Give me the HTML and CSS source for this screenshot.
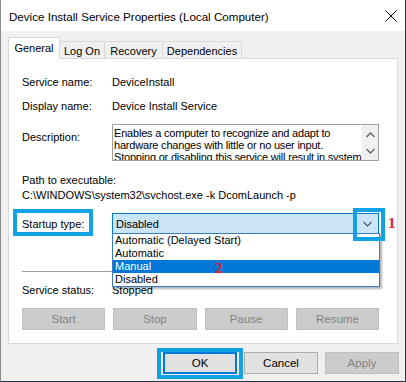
FILE: index.html
```html
<!DOCTYPE html>
<html>
<head>
<meta charset="utf-8">
<link rel="stylesheet" href="styles.css">
</head>
<body>
<div class="window">
  <div class="titlebar">
    <span class="title">Device Install Service Properties (Local Computer)</span>
    <svg class="close" width="12" height="12" viewBox="0 0 12 12"><path d="M0.5 0.5L11.5 11.5M11.5 0.5L0.5 11.5" stroke="#000" stroke-width="1"/></svg>
  </div>
  <div class="main">
    <div class="tabs">
      <div class="tab active t-general">General</div>
      <div class="tab t-logon">Log On</div>
      <div class="tab t-recovery">Recovery</div>
      <div class="tab t-deps">Dependencies</div>
    </div>
    <div class="panel">
      <div class="row r-first"><span class="lbl">Service name:</span><span class="val">DeviceInstall</span></div>
      <div class="row r-second"><span class="lbl">Display name:</span><span class="val">Device Install Service</span></div>
      <div class="row r-desc">
        <span class="lbl lbl-desc">Description:</span>
        <div class="desc">
          <div class="desc-text">Enables a computer to recognize and adapt to<br>hardware changes with little or no user input.<br>Stopping or disabling this service will result in system</div>
          <div class="scroll">
            <svg width="9" height="6" viewBox="0 0 9 6"><polyline points="0.5,5 4.5,1 8.5,5" fill="none" stroke="#606060" stroke-width="1.3"/></svg>
            <svg width="9" height="6" viewBox="0 0 9 6"><polyline points="0.5,1 4.5,5 8.5,1" fill="none" stroke="#606060" stroke-width="1.3"/></svg>
          </div>
        </div>
      </div>
      <div class="path-lbl">Path to executable:</div>
      <div class="path">C:\WINDOWS\system32\svchost.exe -k DcomLaunch -p</div>
      <div class="row r-startup">
        <span class="lbl">Startup type:</span>
        <div class="combo">
          <span class="combo-val">Disabled</span>
          <svg class="chev" width="9" height="6" viewBox="0 0 9 6"><polyline points="0.5,1 4.5,5 8.5,1" fill="none" stroke="#555" stroke-width="1.1"/></svg>
          <div class="list">
            <div class="item">Automatic (Delayed Start)</div>
            <div class="item">Automatic</div>
            <div class="item sel">Manual</div>
            <div class="item">Disabled</div>
          </div>
        </div>
      </div>
      <div class="sep"></div>
      <div class="row r-status"><span class="lbl">Service status:</span><span class="val">Stopped</span></div>
      <div class="svc-buttons">
        <div class="btn dis">Start</div>
        <div class="btn dis">Stop</div>
        <div class="btn dis">Pause</div>
        <div class="btn dis">Resume</div>
      </div>
    </div>
    <div class="actions">
      <div class="btn ok">OK</div>
      <div class="btn">Cancel</div>
      <div class="btn dis">Apply</div>
    </div>
  </div>
  <div class="mark mark-startup"></div>
  <div class="mark mark-chev"></div>
  <div class="mark mark-ok"></div>
  <div class="num num1">1</div>
  <div class="num num2">2</div>
</div>
</body>
</html>
```

FILE: styles.css
```css
html, body {
  margin: 0;
  padding: 0;
}
body {
  font-family: "Liberation Sans", Arial, sans-serif;
  font-size: 11px;
  color: #000;
  background: #f0f0f0;
}
.window {
  position: relative;
  width: 406px;
  height: 382px;
  box-sizing: border-box;
  background: #f0f0f0;
  border-left: 1px solid #8d8d8d;
  border-right: 1px solid #26344f;
  border-bottom: 1px solid #26344f;
  overflow: hidden;
  display: flex;
  flex-direction: column;
}
.titlebar {
  height: 31px;
  flex: none;
  background: #fff;
  display: flex;
  align-items: center;
  justify-content: space-between;
  padding: 0 8px 0 8px;
  font-size: 11.6px;
}
.title {
  padding-top: 1px;
}
.close {
  display: block;
  margin-top: 1px;
}
.main {
  padding: 6px 7px 0 7px;
}
.tabs {
  display: flex;
  align-items: flex-end;
  height: 21px;
}
.tab {
  box-sizing: border-box;
  height: 17px;
  border: 1px solid #d9d9d9;
  border-bottom: none;
  background: #f0f0f0;
  display: flex;
  align-items: center;
  justify-content: center;
  margin-left: -1px;
  padding-top: 1px;
}
.tab.active {
  height: 22px;
  margin-left: 0;
  margin-bottom: -1px;
  background: #fff;
  position: relative;
  z-index: 1;
  padding-top: 0;
  padding-bottom: 2px;
}
.t-general { width: 52px; }
.t-logon { width: 46px; }
.t-recovery { width: 59px; }
.t-deps { width: 80px; }
.panel {
  position: relative;
  box-sizing: border-box;
  height: 286px;
  background: #fff;
  border: 1px solid #d9d9d9;
  padding: 16px 18px 0 13px;
}
.row {
  display: flex;
  align-items: center;
  line-height: 14px;
}
.lbl {
  width: 90px;
  flex: none;
}
.r-second { margin-top: 10px; }
.r-desc {
  margin-top: 11px;
  align-items: flex-start;
}
.lbl-desc { padding-top: 6px; }
.desc {
  box-sizing: border-box;
  width: 267px;
  height: 37px;
  border: 1px solid #a0a0a0;
  display: flex;
  overflow: hidden;
}
.desc-text {
  flex: 1;
  line-height: 12px;
  padding: 2px 0 0 1px;
  white-space: nowrap;
  overflow: hidden;
  letter-spacing: -0.2px;
}
.scroll {
  width: 16px;
  flex: none;
  background: #f0f0f0;
  display: flex;
  flex-direction: column;
  align-items: center;
  gap: 10px;
  padding-top: 7px;
}
.scroll svg { display: block; }
.path-lbl {
  margin-top: 12px;
  line-height: 15px;
}
.path {
  line-height: 15px;
}
.r-startup {
  margin-top: 10px;
}
.combo {
  position: relative;
  box-sizing: border-box;
  width: 268px;
  height: 21px;
  background: #cce4f7;
  border: 1px solid #0078d7;
  display: flex;
  align-items: center;
  justify-content: space-between;
  padding: 0 6px 0 3px;
}
.chev { display: block; margin-top: 1px; }
.list {
  position: absolute;
  top: 19px;
  left: -1px;
  width: 268px;
  box-sizing: border-box;
  background: #fff;
  border: 1px solid #3a7cc4;
  box-shadow: 2px 2px 2px rgba(0, 0, 0, 0.3);
  z-index: 3;
}
.item {
  height: 13px;
  line-height: 13px;
  padding-left: 2px;
}
.item.sel {
  background: #0078d7;
  color: #fff;
}
.sep {
  margin-top: 37px;
  height: 1px;
  background: #a0a0a0;
}
.r-status { margin-top: 11px; }
.svc-buttons {
  margin-top: 11px;
  display: grid;
  grid-template-columns: repeat(4, 1fr);
  gap: 8px;
}
.btn {
  box-sizing: border-box;
  height: 22px;
  border: 1px solid #adadad;
  background: #e1e1e1;
  display: flex;
  align-items: center;
  justify-content: center;
  font-size: 11.5px;
}
.btn.dis {
  background: #cccccc;
  border-color: #bfbfbf;
  color: #838383;
}
.btn.ok {
  border: 2px solid #0078d7;
}
.actions {
  margin-top: 8px;
  margin-right: -1px;
  display: flex;
  justify-content: flex-end;
  gap: 7px;
}
.actions .btn {
  width: 74px;
}
.mark {
  position: absolute;
  box-sizing: border-box;
  border: 4px solid #10a2e5;
  z-index: 5;
}
.mark-startup { left: 12px; top: 209px; width: 80px; height: 27px; }
.mark-chev { left: 352px; top: 208px; width: 32px; height: 33px; }
.mark-ok { left: 156px; top: 348px; width: 86px; height: 31px; }
.num {
  position: absolute;
  font-family: "Liberation Serif", "Times New Roman", serif;
  font-weight: bold;
  color: #e4202a;
  line-height: 1;
  z-index: 6;
}
.num1 { left: 387px; top: 216px; font-size: 15px; }
.num2 { left: 214px; top: 261px; font-size: 15px; }
```
